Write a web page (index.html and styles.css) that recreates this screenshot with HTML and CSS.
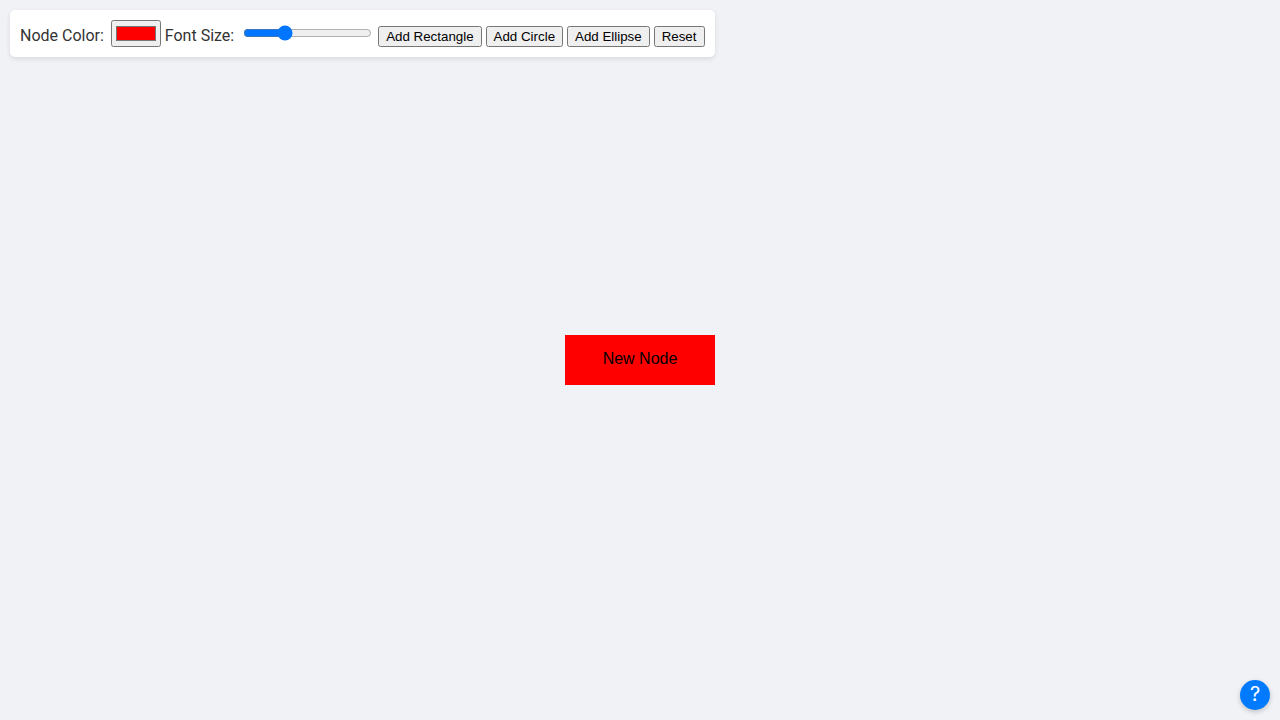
FILE: index.html
```html
<!DOCTYPE html>
<html lang="en">
<head>
<meta charset="utf-8">
<title>Node Editor</title>
<link rel="stylesheet" href="styles.css">
</head>
<body>
<div class="toolbar">
  <label class="toolbar-label" for="node-color">Node Color:</label>
  <input type="color" id="node-color" value="#ff0000">
  <label class="toolbar-label" for="font-size">Font Size:</label>
  <input type="range" id="font-size" min="10" max="30" value="16">
  <button type="button">Add Rectangle</button>
  <button type="button">Add Circle</button>
  <button type="button">Add Ellipse</button>
  <button type="button">Reset</button>
</div>
<main class="canvas">
  <div class="node">New Node</div>
</main>
<button type="button" class="help" aria-label="Help">?</button>
</body>
</html>
```
FILE: styles.css
```css
body {
  margin: 0;
  background: #f0f2f6;
  color: #333;
  font-family: Roboto, sans-serif;
  font-size: 16px;
  overflow: hidden;
}

.toolbar {
  position: absolute;
  top: 10px;
  left: 10px;
  z-index: 1;
  padding: 10px;
  background: #fff;
  border-radius: 5px;
  box-shadow: 0 2px 5px rgba(0, 0, 0, 0.1);
}

.toolbar-label {
  margin-right: 3px;
}

.canvas {
  display: flex;
  align-items: center;
  justify-content: center;
  height: 100vh;
}

.node {
  width: 150px;
  height: 50px;
  background: #f00;
  color: #000;
  font-family: "Liberation Sans", Arial, sans-serif;
  line-height: 48px;
  text-align: center;
}

.help {
  position: absolute;
  right: 10px;
  bottom: 10px;
  width: 30px;
  height: 30px;
  padding: 0 0 2px;
  border: 0;
  border-radius: 50%;
  background: #007bff;
  color: #fff;
  font-family: Inter, sans-serif;
  font-size: 20px;
  line-height: 28px;
  text-align: center;
  box-shadow: 0 2px 5px rgba(0, 0, 0, 0.2);
}
```
